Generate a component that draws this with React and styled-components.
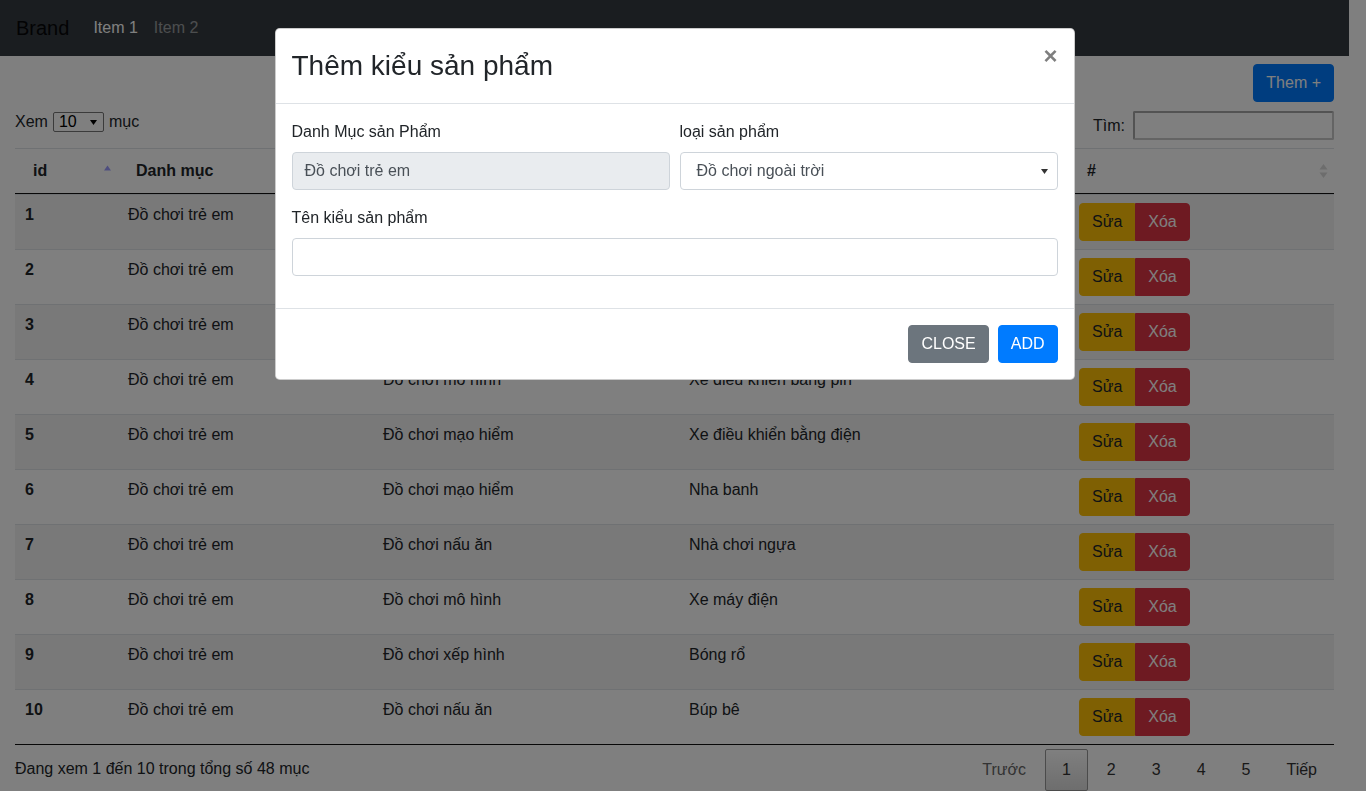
import React from 'react';
import styled, { createGlobalStyle } from 'styled-components';

const GlobalStyle = createGlobalStyle`
  html, body { margin: 0; padding: 0; overflow: hidden; background: #fff; }
  body {
    font-family: "Liberation Sans", Arial, sans-serif;
    font-size: 16px;
    line-height: 1.5;
    color: #212529;
  }
  *, *::before, *::after { box-sizing: border-box; }
`;

const Page = styled.div`
  padding-right: 17px;
`;

const Navbar = styled.nav`
  display: flex;
  align-items: center;
  height: 56px;
  padding: 8px 16px;
  background: #343a40;
`;

const Brand = styled.span`
  font-size: 20px;
  line-height: 30px;
  padding: 5px 0;
  margin-right: 16px;
  color: rgba(0, 0, 0, 0.9);
`;

const NavLink = styled.span`
  padding: 8px;
  line-height: 24px;
  color: ${(p) => (p.$active ? '#fff' : 'rgba(255,255,255,0.5)')};
`;

const Main = styled.main`
  padding: 8px 15px 0;
`;

const TopBar = styled.div`
  display: flex;
  justify-content: flex-end;
`;

const Button = styled.button`
  font-family: inherit;
  font-size: 16px;
  line-height: 24px;
  padding: 6px 12px;
  border: 1px solid ${(p) => p.$bg};
  background: ${(p) => p.$bg};
  color: ${(p) => p.$fg || '#fff'};
  border-radius: 4px;
  cursor: pointer;
  white-space: nowrap;
`;

const Controls = styled.div`
  display: flex;
  justify-content: space-between;
  align-items: flex-start;
  margin-top: 8px;
  height: 30px;
`;

const Length = styled.div`
  display: flex;
  align-items: center;
  gap: 5px;
  margin-top: 2px;
  height: 20px;
  line-height: 20px;
`;

const MiniSelect = styled.div`
  display: flex;
  align-items: center;
  justify-content: space-between;
  width: 51px;
  height: 20px;
  padding: 0 6px 0 5px;
  border: 1px solid #767676;
  border-radius: 2px;
  font-size: 16px;
  color: #000;
`;

const Filter = styled.label`
  display: flex;
  align-items: center;
  margin-top: 1px;
`;

const SearchBox = styled.input`
  width: 201px;
  height: 29px;
  margin-left: 8px;
  border: 2px solid #a7a7a7;
  border-right-color: #c8c8c8;
  border-bottom-color: #c8c8c8;
  border-radius: 2px;
  background: transparent;
  font-family: inherit;
  font-size: 16px;
`;

const Table = styled.table`
  width: 100%;
  margin-top: 8px;
  border-collapse: separate;
  border-spacing: 0;
  table-layout: fixed;
`;

const Th = styled.th`
  position: relative;
  text-align: left;
  font-weight: 700;
  padding: 10px 18px;
  line-height: 24px;
  border-top: 1px solid #dee2e6;
  border-bottom: 1px solid #111;
  white-space: nowrap;
  overflow: hidden;
`;

const SortIcon = styled.span`
  position: absolute;
  right: 6px;
  top: 50%;
  transform: translateY(-50%);
  display: flex;
`;

const Row = styled.tr`
  background: ${(p) => (p.$odd ? 'rgba(0,0,0,0.05)' : 'transparent')};
`;

const Td = styled.td`
  padding: 8px 10px;
  line-height: 24px;
  vertical-align: top;
  border-top: 1px solid #dee2e6;
  border-bottom: ${(p) => (p.$last ? '1px solid #111' : 'none')};
  font-weight: ${(p) => (p.$bold ? 700 : 400)};
  white-space: nowrap;
  overflow: hidden;
`;

const BtnGroup = styled.div`
  display: inline-flex;
  & > button:first-child { border-top-right-radius: 0; border-bottom-right-radius: 0; }
  & > button:last-child { border-top-left-radius: 0; border-bottom-left-radius: 0; }
`;

const TableFooter = styled.div`
  display: flex;
  justify-content: space-between;
  align-items: flex-start;
`;

const Info = styled.div`
  padding-top: 12px;
  line-height: 24px;
`;

const Paginate = styled.div`
  display: flex;
  padding-top: 4px;
`;

const PageButton = styled.span`
  min-width: 24px;
  padding: 8px 16px;
  margin-left: 2px;
  text-align: center;
  line-height: 24px;
  border-radius: 2px;
  border: 1px solid ${(p) => (p.$current ? '#979797' : 'transparent')};
  background: ${(p) => (p.$current ? 'linear-gradient(to bottom, #fff 0%, #dcdcdc 100%)' : 'transparent')};
  color: ${(p) => (p.$disabled ? '#666' : '#333')};
`;

const Backdrop = styled.div`
  position: fixed;
  inset: 0;
  background: rgba(0, 0, 0, 0.5);
  z-index: 1040;
`;

const ModalWrap = styled.div`
  position: fixed;
  inset: 0;
  z-index: 1050;
  padding-right: 17px;
  overflow: hidden;
`;

const Dialog = styled.div`
  max-width: 800px;
  margin: 28px auto;
`;

const ModalContent = styled.div`
  background: #fff;
  border: 1px solid rgba(0, 0, 0, 0.2);
  border-radius: 4.8px;
  overflow: hidden;
`;

const ModalHeader = styled.div`
  display: flex;
  align-items: flex-start;
  justify-content: space-between;
  padding: 16px;
  border-bottom: 1px solid #dee2e6;
`;

const ModalTitle = styled.h2`
  margin: 0;
  font-size: 28px;
  font-weight: 400;
  line-height: 42px;
  color: #212529;
`;

const CloseX = styled.button`
  margin: -16px -16px -16px auto;
  padding: 16px;
  background: transparent;
  border: 0;
  font-family: inherit;
  font-size: 24px;
  font-weight: 700;
  line-height: 22px;
  color: #000;
  opacity: 0.5;
  text-shadow: 0 1px 0 #fff;
  cursor: pointer;
`;

const ModalBody = styled.div`
  padding: 16px;
`;

const FormRow = styled.div`
  display: grid;
  grid-template-columns: 1fr 1fr;
  column-gap: 10px;
`;

const FormGroup = styled.div`
  margin-bottom: 16px;
`;

const Label = styled.label`
  display: block;
  margin-bottom: 8px;
  line-height: 24px;
`;

const Field = styled.div`
  display: flex;
  align-items: center;
  justify-content: space-between;
  height: 38px;
  padding: 6px ${(p) => (p.$select ? '9px' : '12px')} 6px ${(p) => (p.$select ? '16px' : '12px')};
  border: 1px solid #ced4da;
  border-radius: 4px;
  background: ${(p) => (p.$disabled ? '#e9ecef' : '#fff')};
  color: #495057;
  line-height: 24px;
`;

const ModalFooter = styled.div`
  display: flex;
  justify-content: flex-end;
  align-items: center;
  gap: 9px;
  padding: 16px;
  border-top: 1px solid #dee2e6;
`;

const rows = [
  ['Đồ chơi trẻ em', 'Đồ chơi ngoài trời', 'Cầu trượt'],
  ['Đồ chơi trẻ em', 'Đồ chơi mô hình', 'Xe điều khiển bằng xăng'],
  ['Đồ chơi trẻ em', 'Đồ chơi xếp hình', 'Lego'],
  ['Đồ chơi trẻ em', 'Đồ chơi mô hình', 'Xe điều khiển bằng pin'],
  ['Đồ chơi trẻ em', 'Đồ chơi mạo hiểm', 'Xe điều khiển bằng điện'],
  ['Đồ chơi trẻ em', 'Đồ chơi mạo hiểm', 'Nha banh'],
  ['Đồ chơi trẻ em', 'Đồ chơi nấu ăn', 'Nhà chơi ngựa'],
  ['Đồ chơi trẻ em', 'Đồ chơi mô hình', 'Xe máy điện'],
  ['Đồ chơi trẻ em', 'Đồ chơi xếp hình', 'Bóng rổ'],
  ['Đồ chơi trẻ em', 'Đồ chơi nấu ăn', 'Búp bê'],
];

const Sort = ({ asc }) => (
  <SortIcon>
    <svg width="9" height="15" viewBox="0 0 9 15">
      {asc ? (
        <path d="M1 7 L4.5 2 L8 7 Z" fill="#9d9dff" />
      ) : (
        <>
          <path d="M0.5 6 L4.5 0.5 L8.5 6 Z" fill="#dadada" />
          <path d="M0.5 9 L8.5 9 L4.5 14.5 Z" fill="#dadada" />
        </>
      )}
    </svg>
  </SortIcon>
);

export default function App() {
  return (
    <>
      <GlobalStyle />
      <Page>
        <Navbar>
          <Brand>Brand</Brand>
          <NavLink $active>Item 1</NavLink>
          <NavLink>Item 2</NavLink>
        </Navbar>
        <Main>
          <TopBar>
            <Button $bg="#007bff">Them +</Button>
          </TopBar>
          <Controls>
            <Length>
              <span>Xem</span>
              <MiniSelect>
                <span>10</span>
                <svg width="7" height="5" viewBox="0 0 7 5">
                  <path d="M0 0 L7 0 L3.5 5 Z" fill="#000" />
                </svg>
              </MiniSelect>
              <span>mục</span>
            </Length>
            <Filter>
              Tìm:
              <SearchBox type="search" />
            </Filter>
          </Controls>
          <Table>
            <colgroup>
              <col style={{ width: 103 }} />
              <col style={{ width: 255 }} />
              <col style={{ width: 306 }} />
              <col style={{ width: 390 }} />
              <col style={{ width: 265 }} />
            </colgroup>
            <thead>
              <tr>
                <Th>id<Sort asc /></Th>
                <Th>Danh mục<Sort /></Th>
                <Th>Loại sản phẩm<Sort /></Th>
                <Th>Tên kiểu sản phẩm<Sort /></Th>
                <Th>#<Sort /></Th>
              </tr>
            </thead>
            <tbody>
              {rows.map((r, i) => {
                const last = i === rows.length - 1;
                return (
                  <Row key={i} $odd={i % 2 === 0}>
                    <Td $bold $last={last}>{i + 1}</Td>
                    <Td $last={last}>{r[0]}</Td>
                    <Td $last={last}>{r[1]}</Td>
                    <Td $last={last}>{r[2]}</Td>
                    <Td $last={last}>
                      <BtnGroup>
                        <Button $bg="#ffc107" $fg="#212529">Sửa</Button>
                        <Button $bg="#dc3545">Xóa</Button>
                      </BtnGroup>
                    </Td>
                  </Row>
                );
              })}
            </tbody>
          </Table>
          <TableFooter>
            <Info>Đang xem 1 đến 10 trong tổng số 48 mục</Info>
            <Paginate>
              <PageButton $disabled>Trước</PageButton>
              <PageButton $current>1</PageButton>
              <PageButton>2</PageButton>
              <PageButton>3</PageButton>
              <PageButton>4</PageButton>
              <PageButton>5</PageButton>
              <PageButton>Tiếp</PageButton>
            </Paginate>
          </TableFooter>
        </Main>
      </Page>
      <Backdrop />
      <ModalWrap>
        <Dialog>
          <ModalContent>
            <ModalHeader>
              <ModalTitle>Thêm kiểu sản phẩm</ModalTitle>
              <CloseX aria-label="Close">×</CloseX>
            </ModalHeader>
            <ModalBody>
              <FormRow>
                <FormGroup>
                  <Label>Danh Mục sản Phẩm</Label>
                  <Field $disabled>Đồ chơi trẻ em</Field>
                </FormGroup>
                <FormGroup>
                  <Label>loại sản phẩm</Label>
                  <Field $select>
                    <span>Đồ chơi ngoài trời</span>
                    <svg width="7" height="5" viewBox="0 0 7 5">
                      <path d="M0 0 L7 0 L3.5 5 Z" fill="#333" />
                    </svg>
                  </Field>
                </FormGroup>
              </FormRow>
              <FormGroup>
                <Label>Tên kiểu sản phẩm</Label>
                <Field />
              </FormGroup>
            </ModalBody>
            <ModalFooter>
              <Button $bg="#6c757d">CLOSE</Button>
              <Button $bg="#007bff">ADD</Button>
            </ModalFooter>
          </ModalContent>
        </Dialog>
      </ModalWrap>
    </>
  );
}
